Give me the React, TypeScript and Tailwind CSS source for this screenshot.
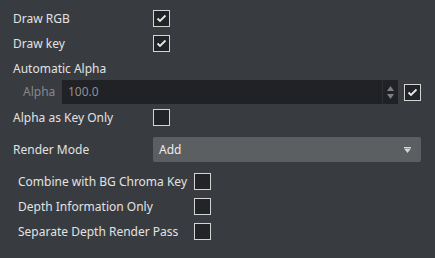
import React from "react";

const font = { fontFamily: '"Noto Sans", "Open Sans", sans-serif' };

function Check({ checked }: { checked?: boolean }) {
  return (
    <div className="w-[17px] h-[17px] shrink-0 border border-[#d4d4d4] bg-[#222428] flex items-center justify-center">
      {checked && (
        <svg width="11" height="9" viewBox="0 0 11 9">
          <polyline points="1.5,4.5 4,7 9.5,1.5" fill="none" stroke="#e8e8e8" strokeWidth="1.8" />
        </svg>
      )}
    </div>
  );
}

function Row({ label, checked }: { label: string; checked?: boolean }) {
  return (
    <div className="flex items-center h-[17px]">
      <div className="w-[140px] text-[12px] text-[#e2e2e2] leading-none">{label}</div>
      <Check checked={checked} />
    </div>
  );
}

function Row2({ label }: { label: string }) {
  return (
    <div className="flex items-center h-[17px] pl-[5px]">
      <div className="w-[176px] text-[12px] text-[#e2e2e2] leading-none">{label}</div>
      <Check />
    </div>
  );
}

export default function App() {
  return (
    <div className="w-[435px] h-[258px] bg-[#383b40] pt-[10px] pl-[13px]" style={font}>
      <div className="flex flex-col">
        <Row label="Draw RGB" checked />
        <div className="mt-[8px]"><Row label="Draw key" checked /></div>
        <div className="mt-[8px] h-[17px] flex items-center text-[12px] text-[#e2e2e2] leading-none">Automatic Alpha</div>
        <div className="mt-[3px] flex items-center h-[24px]">
          <div className="w-[49px] pl-[10px] text-[12px] text-[#86898c] leading-none">Alpha</div>
          <div className="w-[336px] h-[24px] bg-[#202226] flex items-center">
            <div className="flex-1 pl-[6px] text-[12px] text-[#8e9194] leading-none">100.0</div>
            <div className="w-[16px] h-[24px] border-l border-[#2c2f33] flex flex-col items-center justify-center gap-[3px]">
              <svg width="7" height="5" viewBox="0 0 7 5"><polygon points="3.5,0 7,5 0,5" fill="#7c7f83" /></svg>
              <svg width="7" height="5" viewBox="0 0 7 5"><polygon points="0,0 7,0 3.5,5" fill="#7c7f83" /></svg>
            </div>
          </div>
          <div className="ml-[6px]"><Check checked /></div>
        </div>
        <div className="mt-[5px]"><Row label="Alpha as Key Only" /></div>
        <div className="mt-[11px] flex items-center h-[25px]">
          <div className="w-[140px] text-[12px] text-[#e2e2e2] leading-none">Render Mode</div>
          <div className="w-[268px] h-[25px] bg-[#5b5f62] rounded-[2px] flex items-center pl-[6px] pr-[10px]">
            <div className="flex-1 text-[12px] text-[#ececec] leading-none">Add</div>
            <svg width="7" height="6" viewBox="0 0 7 6">
              <rect x="0" y="0" width="7" height="1" fill="#d6d6d6" />
              <polygon points="0,1.5 7,1.5 3.5,6" fill="#d6d6d6" />
            </svg>
          </div>
        </div>
        <div className="mt-[11px]"><Row2 label="Combine with BG Chroma Key" /></div>
        <div className="mt-[8px]"><Row2 label="Depth Information Only" /></div>
        <div className="mt-[8px]"><Row2 label="Separate Depth Render Pass" /></div>
      </div>
    </div>
  );
}
